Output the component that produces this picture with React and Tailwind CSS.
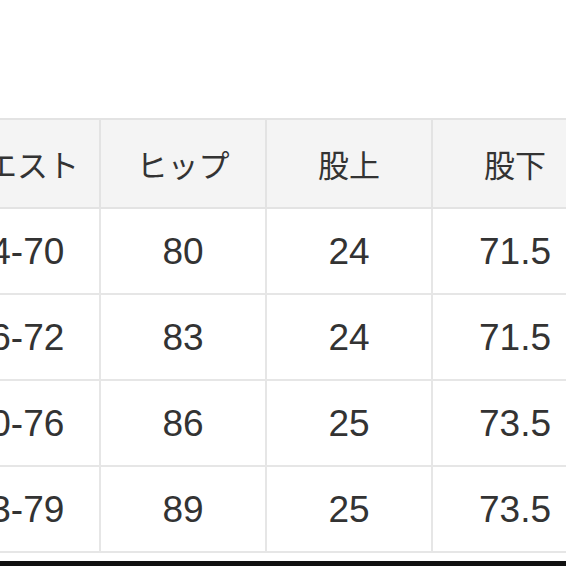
import React from 'react';

const headers = ['ウエスト', 'ヒップ', '股上', '股下', '総丈'];

const rows = [
    ['64-70', '80', '24', '71.5', '98'],
    ['66-72', '83', '24', '71.5', '98'],
    ['70-76', '86', '25', '73.5', '100'],
    ['73-79', '89', '25', '73.5', '100'],
];

const App = () => {
    return (
        <div
            className="w-[566px] h-[566px] overflow-hidden bg-white flex flex-col text-[#333]"
            style={{ fontFamily: '"Liberation Sans", "Noto Sans CJK JP", sans-serif' }}
        >
            <div className="h-[118px] shrink-0" />
            <div className="ml-[-67px] shrink-0">
                <table className="border-collapse table-fixed">
                    <thead>
                        <tr className="bg-[#f4f4f4] h-[89px]">
                            {headers.map((h) => (
                                <th
                                    key={h}
                                    className="w-[166px] min-w-[166px] border-2 border-[#e3e3e3] text-[31px] font-normal text-center align-middle leading-none"
                                    style={{ fontFamily: '"Noto Sans CJK JP", sans-serif' }}
                                >
                                    {h}
                                </th>
                            ))}
                        </tr>
                    </thead>
                    <tbody>
                        {rows.map((row, i) => (
                            <tr key={i} className="h-[86px]">
                                {row.map((v, j) => (
                                    <td
                                        key={j}
                                        className="w-[166px] min-w-[166px] border-2 border-[#e6e6e6] text-[37px] text-center align-middle leading-none"
                                    >
                                        {v}
                                    </td>
                                ))}
                            </tr>
                        ))}
                    </tbody>
                </table>
            </div>
            <div className="flex-1" />
            <div className="h-[5px] bg-[#111] shrink-0" />
        </div>
    );
};

export default App;
